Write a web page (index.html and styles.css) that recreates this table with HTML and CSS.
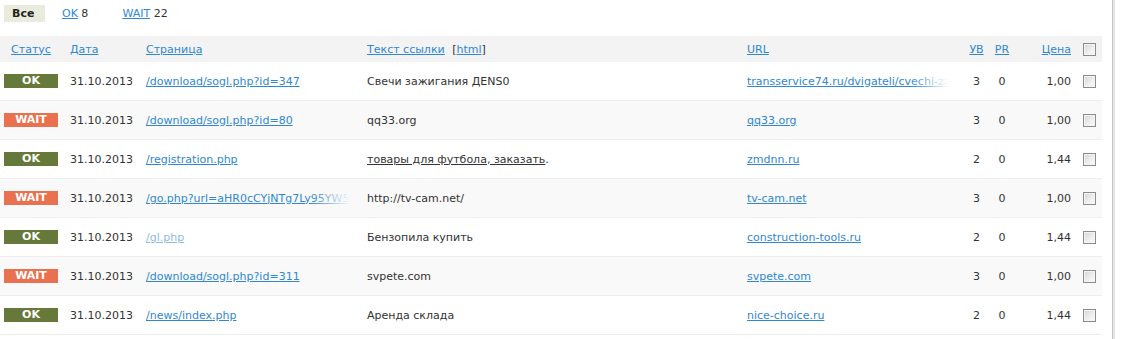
FILE: index.html
```html
<!DOCTYPE html>
<html lang="ru">
<head>
<meta charset="utf-8">
<title>Ссылки</title>
<link rel="stylesheet" href="styles.css">
</head>
<body>
<div class="page">
  <div class="tabs">
    <span class="tab tab-active">Все</span>
    <span class="tab"><a href="#">OK</a> 8</span>
    <span class="tab"><a href="#">WAIT</a> 22</span>
  </div>
  <table class="links">
    <colgroup>
      <col class="c-status"><col class="c-date"><col class="c-page"><col class="c-text"><col class="c-url"><col class="c-uv"><col class="c-pr"><col class="c-price"><col class="c-check">
    </colgroup>
    <thead>
      <tr>
        <th class="status"><a href="#">Статус</a></th>
        <th><a href="#">Дата</a></th>
        <th><a href="#">Страница</a></th>
        <th><a href="#">Текст ссылки</a> <span class="br">[<a href="#">html</a>]</span></th>
        <th><a href="#">URL</a></th>
        <th class="num"><a href="#">УВ</a></th>
        <th class="num"><a href="#">PR</a></th>
        <th class="price"><a href="#">Цена</a></th>
        <th class="check"><span class="cb"></span></th>
      </tr>
    </thead>
    <tbody>
      <tr>
        <td class="status"><span class="badge ok">OK</span></td>
        <td>31.10.2013</td>
        <td class="fade-cell"><div class="clip"><a href="#">/download/sogl.php?id=347</a></div></td>
        <td>Свечи зажигания ДENS0</td>
        <td class="fade-cell url"><div class="clip"><a href="#">transservice74.ru/dvigateli/cvechi-zazhiganiya-denso</a></div></td>
        <td class="num">3</td>
        <td class="num">0</td>
        <td class="price">1,00</td>
        <td class="check"><span class="cb"></span></td>
      </tr>
      <tr class="alt">
        <td class="status"><span class="badge wait">WAIT</span></td>
        <td>31.10.2013</td>
        <td class="fade-cell"><div class="clip"><a href="#">/download/sogl.php?id=80</a></div></td>
        <td>qq33.org</td>
        <td class="fade-cell url"><div class="clip"><a href="#">qq33.org</a></div></td>
        <td class="num">3</td>
        <td class="num">0</td>
        <td class="price">1,00</td>
        <td class="check"><span class="cb"></span></td>
      </tr>
      <tr>
        <td class="status"><span class="badge ok">OK</span></td>
        <td>31.10.2013</td>
        <td class="fade-cell"><div class="clip"><a href="#">/registration.php</a></div></td>
        <td><a href="#" class="dark">товары для футбола, заказать</a>.</td>
        <td class="fade-cell url"><div class="clip"><a href="#">zmdnn.ru</a></div></td>
        <td class="num">2</td>
        <td class="num">0</td>
        <td class="price">1,44</td>
        <td class="check"><span class="cb"></span></td>
      </tr>
      <tr class="alt">
        <td class="status"><span class="badge wait">WAIT</span></td>
        <td>31.10.2013</td>
        <td class="fade-cell"><div class="clip"><a href="#">/go.php?url=aHR0cCYjNTg7Ly95YW5kZXgucnU</a></div></td>
        <td>http://tv-cam.net/</td>
        <td class="fade-cell url"><div class="clip"><a href="#">tv-cam.net</a></div></td>
        <td class="num">3</td>
        <td class="num">0</td>
        <td class="price">1,00</td>
        <td class="check"><span class="cb"></span></td>
      </tr>
      <tr>
        <td class="status"><span class="badge ok">OK</span></td>
        <td>31.10.2013</td>
        <td class="fade-cell"><div class="clip"><a href="#" class="visited">/gl.php</a></div></td>
        <td>Бензопила купить</td>
        <td class="fade-cell url"><div class="clip"><a href="#">construction-tools.ru</a></div></td>
        <td class="num">2</td>
        <td class="num">0</td>
        <td class="price">1,44</td>
        <td class="check"><span class="cb"></span></td>
      </tr>
      <tr class="alt">
        <td class="status"><span class="badge wait">WAIT</span></td>
        <td>31.10.2013</td>
        <td class="fade-cell"><div class="clip"><a href="#">/download/sogl.php?id=311</a></div></td>
        <td>svpete.com</td>
        <td class="fade-cell url"><div class="clip"><a href="#">svpete.com</a></div></td>
        <td class="num">3</td>
        <td class="num">0</td>
        <td class="price">1,00</td>
        <td class="check"><span class="cb"></span></td>
      </tr>
      <tr>
        <td class="status"><span class="badge ok">OK</span></td>
        <td>31.10.2013</td>
        <td class="fade-cell"><div class="clip"><a href="#">/news/index.php</a></div></td>
        <td>Аренда склада</td>
        <td class="fade-cell url"><div class="clip"><a href="#">nice-choice.ru</a></div></td>
        <td class="num">2</td>
        <td class="num">0</td>
        <td class="price">1,44</td>
        <td class="check"><span class="cb"></span></td>
      </tr>
    </tbody>
  </table>
</div>
</body>
</html>
```
FILE: styles.css
```css
html, body {
  margin: 0;
  padding: 0;
  background: #fff;
}
body {
  font-family: "DejaVu Sans", Verdana, sans-serif;
  font-size: 11px;
  color: #333;
}
a {
  color: #2f88d0;
  text-decoration: underline;
}
a.dark {
  color: #333;
}
a.visited {
  color: #8dbbe3;
}
.page {
  width: 1112px;
  min-height: 100vh;
  border-right: 1px solid #c4c4c4;
  box-shadow: 2px 0 1px #e6e6e6;
  box-sizing: content-box;
}
.tabs {
  display: flex;
  align-items: center;
  padding: 5px 0 0 4px;
  height: 17px;
  margin-bottom: 14px;
}
.tab {
  padding: 0 8px;
  line-height: 17px;
}
.tab-active {
  background: #e9ecdd;
  font-weight: bold;
  color: #222;
  padding: 0 9px 0 8px;
  min-width: 24px;
  margin-right: 9px;
}
.tab:nth-child(2) {
  margin-right: 18px;
}
table.links {
  width: 1102px;
  table-layout: fixed;
  border-collapse: separate;
  border-spacing: 0;
}
.c-status { width: 66px; }
.c-date { width: 76px; }
.c-page { width: 221px; }
.c-text { width: 380px; }
.c-url { width: 222px; }
.c-uv { width: 23px; }
.c-pr { width: 28px; }
.c-price { width: 59px; }
.c-check { width: 27px; }
th, td {
  padding: 0 0 0 4px;
  text-align: left;
  vertical-align: middle;
  white-space: nowrap;
  overflow: hidden;
}
thead th {
  background: #f3f3f3;
  font-weight: normal;
  height: 26px;
  padding-top: 0;
  padding-bottom: 0;
}
.br {
  margin-left: 4px;
}
tbody td {
  height: 38px;
  background: var(--row-bg, #fff);
}
tbody tr + tr td {
  border-top: 1px solid #eeeeee;
}
tbody tr:last-child td {
  border-bottom: 1px solid #eeeeee;
}
tbody tr.alt {
  --row-bg: #f9f9f9;
}
th.status {
  padding-left: 4px;
}
th.status a {
  display: inline-block;
  width: 54px;
  text-align: center;
}
.badge {
  display: block;
  width: 54px;
  height: 14px;
  line-height: 14px;
  text-align: center;
  color: #fff;
  font-weight: bold;
  font-size: 11px;
}
.badge.ok { background: #66793a; }
.badge.wait { background: #ea7150; }
.fade-cell {
  padding-right: 13px;
}
.fade-cell.url {
  padding-right: 15px;
}
.clip {
  position: relative;
  overflow: hidden;
  white-space: nowrap;
}
.clip::after {
  content: "";
  position: absolute;
  top: 0;
  right: 0;
  bottom: 0;
  width: 40px;
  background: linear-gradient(to right, rgba(255,255,255,0), var(--row-bg, #fff));
}
.num {
  text-align: center;
  padding-left: 0;
}
.price {
  text-align: right;
  padding-right: 4px;
}
.check {
  text-align: center;
  padding-left: 1px;
}
.cb {
  display: inline-block;
  width: 11px;
  height: 11px;
  border: 1px solid #8c8c8c;
  box-shadow: inset 0 0 0 1px #f4f4f4;
  background: linear-gradient(135deg, #d2d4d8 0%, #eef0f2 60%, #fbfbfb 100%);
  vertical-align: middle;
}
```
